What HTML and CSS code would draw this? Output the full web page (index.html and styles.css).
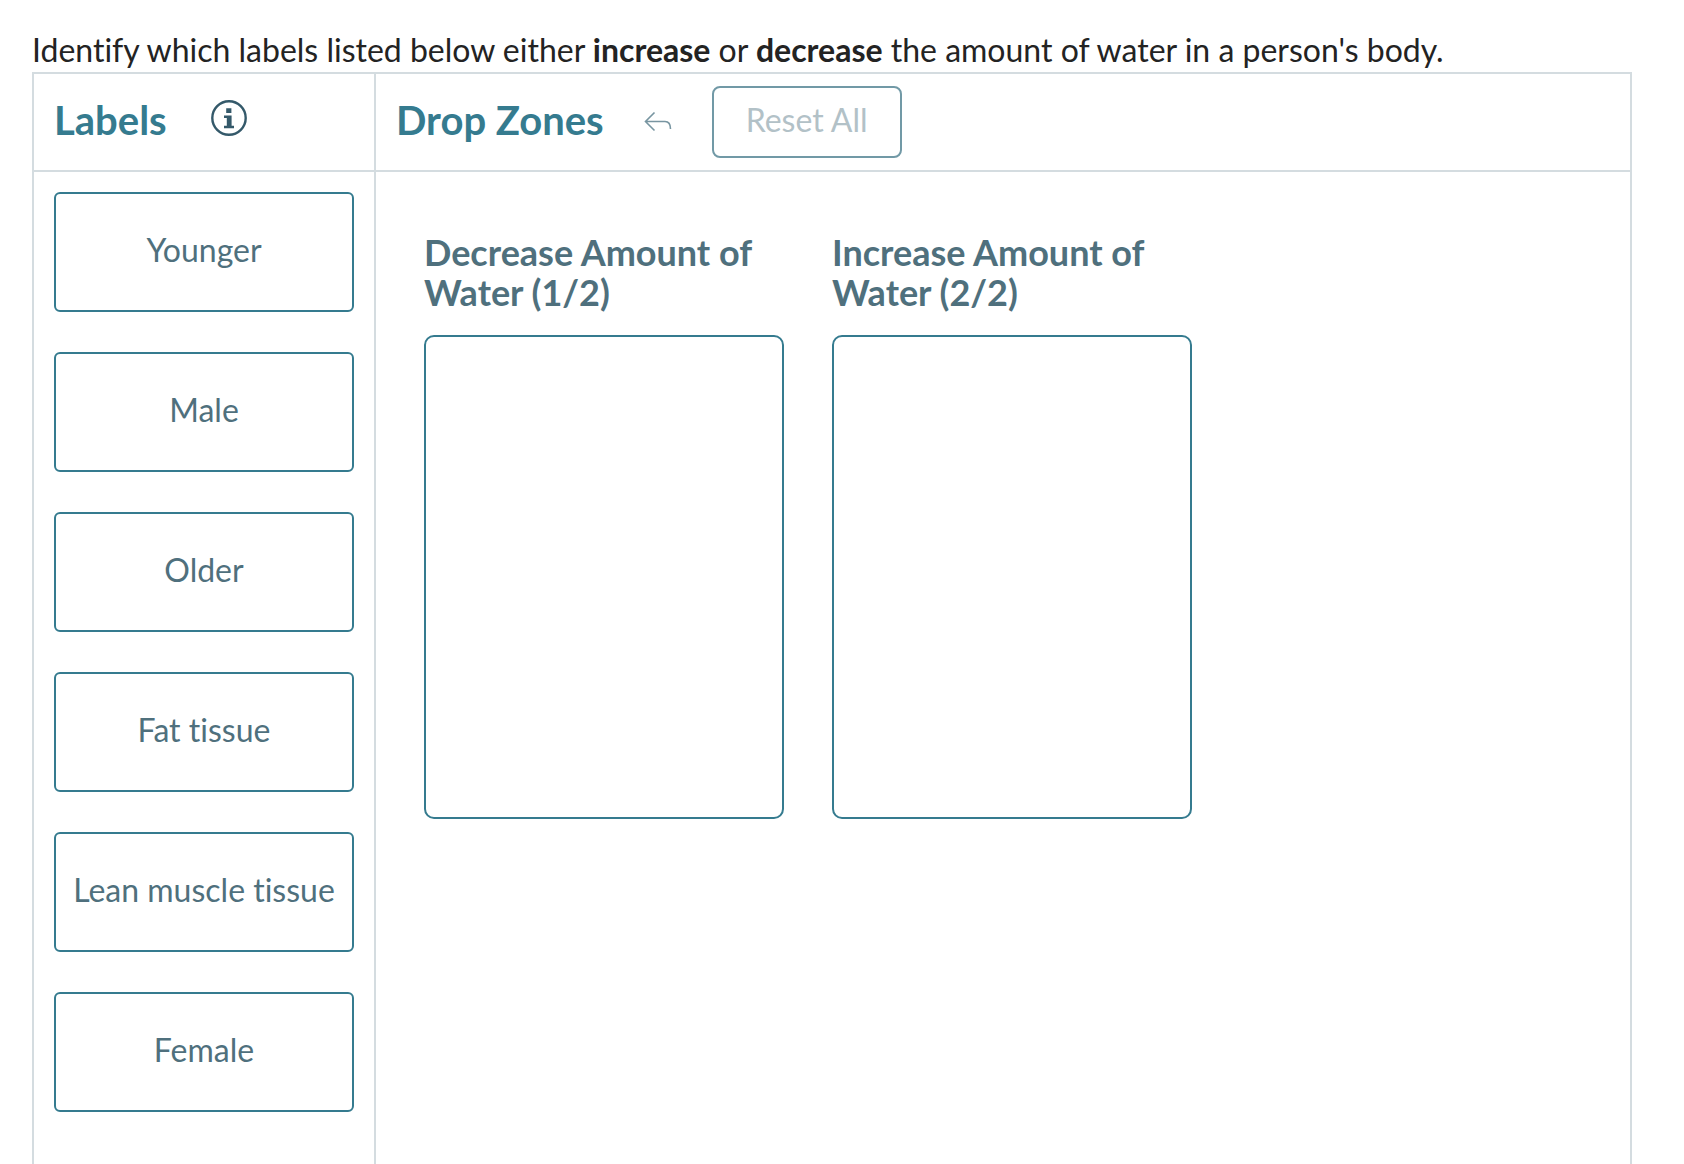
FILE: index.html
```html
<!DOCTYPE html>
<html lang="en">
<head>
    <meta charset="utf-8">
    <title>Labels and Drop Zones</title>
    <link rel="stylesheet" href="styles.css">
</head>
<body>
    <p class="question">Identify which labels listed below either <strong>increase</strong> or <strong>decrease</strong> the amount of water in a person's body.</p>

    <main class="activity">
        <section class="labels">
            <header class="bar">
                <h2>Labels</h2>
                <button type="button" class="icon-button info" aria-label="Information">
                    <svg width="36" height="36" viewBox="0 0 36 36">
                        <circle cx="18" cy="18" r="16.7" fill="none" stroke="#34596a" stroke-width="2.4"/>
                        <path d="M15.2 8.2h5.200v4.800h-5.200zM13 15.600h7.600v10.200h2.400v2.400H13v-2.400h2.800V18H13z" fill="#34596a"/>
                    </svg>
                </button>
            </header>
            <div class="label-list">
                <button type="button" class="label">Younger</button>
                <button type="button" class="label">Male</button>
                <button type="button" class="label">Older</button>
                <button type="button" class="label">Fat tissue</button>
                <button type="button" class="label">Lean muscle tissue</button>
                <button type="button" class="label">Female</button>
            </div>
        </section>

        <section class="zones">
            <header class="bar">
                <h2>Drop Zones</h2>
                <button type="button" class="icon-button undo" aria-label="Undo" disabled>
                    <svg width="28" height="22" viewBox="0 0 28 22">
                        <path d="M10.500 1.500L1.500 10.500l9 9M1.500 10.500H21q5.500 0 5.500 7.500" fill="none" stroke="#7895a1" stroke-width="1.600"/>
                    </svg>
                </button>
                <button type="button" class="reset" disabled>Reset All</button>
            </header>
            <div class="zone-list">
                <div class="zone">
                    <h3>Decrease Amount of Water (1/2)</h3>
                    <div class="drop"></div>
                </div>
                <div class="zone">
                    <h3>Increase Amount of Water (2/2)</h3>
                    <div class="drop"></div>
                </div>
            </div>
        </section>
    </main>
</body>
</html>
```

FILE: styles.css
```css
* {
    box-sizing: border-box;
    margin: 0;
}

body {
    display: flex;
    flex-direction: column;
    min-height: 100vh;
    padding: 30px 52px 0 32px;
    background: #fff;
    color: #232323;
    font-family: Lato, "Open Sans", sans-serif;
    font-size: 32px;
    font-variant-ligatures: none;
}

button {
    background: none;
    font-family: inherit;
    font-variant-ligatures: none;
}

.question {
    padding-bottom: 2px;
    line-height: 40px;
}

.activity {
    display: grid;
    grid-template-columns: 342px 1fr;
    flex: 1;
    border: 2px solid #d4dce0;
    border-bottom: 0;
}

.labels {
    border-right: 2px solid #d4dce0;
}

.bar {
    display: flex;
    align-items: center;
    height: 98px;
    padding: 0 20px;
    border-bottom: 2px solid #d4dce0;
}

h2 {
    padding-bottom: 4px;
    color: #357b8f;
    font-size: 40px;
    line-height: 48px;
}

.icon-button {
    display: flex;
    padding: 0;
    border: 0;
}

.info {
    margin: 0 0 8px 44px;
}

.undo {
    margin: 0 40px;
}

.reset {
    height: 72px;
    padding: 0 32px 6px;
    border: 2px solid #7199a6;
    border-radius: 8px;
    color: #b2c1c7;
    font-size: 32px;
}

.label-list {
    display: flex;
    flex-direction: column;
    gap: 40px;
    padding: 20px;
}

.label {
    height: 120px;
    padding: 0 8px 6px;
    border: 2px solid #357b8f;
    border-radius: 6px;
    color: #4f707d;
    font-size: 32px;
}

.zone-list {
    display: flex;
    gap: 48px;
    padding: 60px 48px;
}

.zone {
    width: 360px;
}

h3 {
    margin-bottom: 23px;
    color: #4f707d;
    font-size: 36px;
    line-height: 40px;
}

.drop {
    height: 484px;
    border: 2px solid #357b8f;
    border-radius: 10px;
}
```
